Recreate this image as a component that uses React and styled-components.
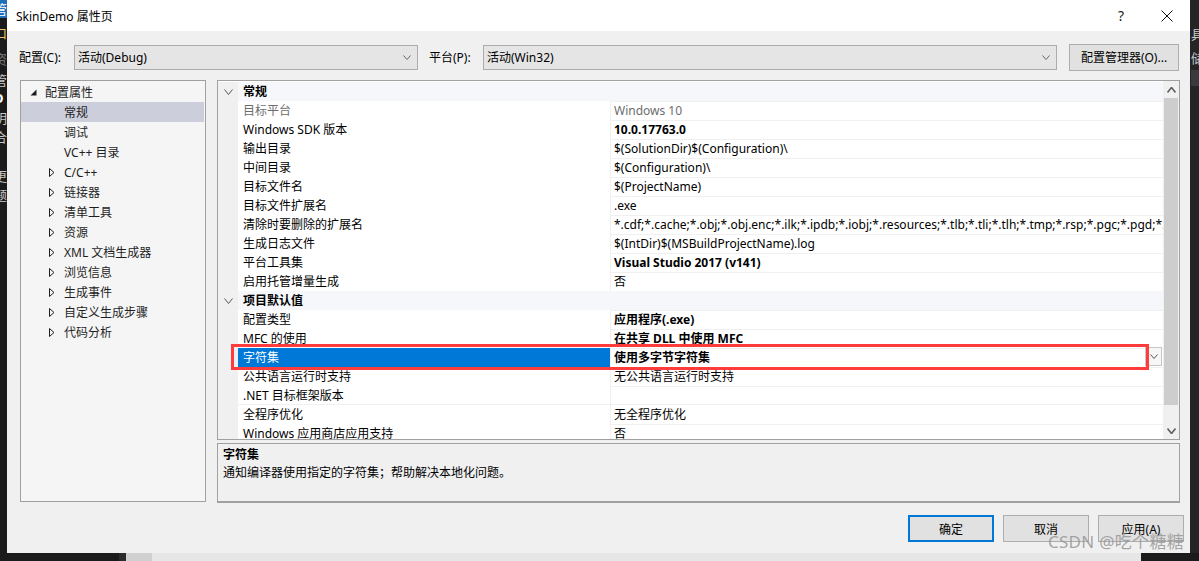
import React from 'react';
import styled, { createGlobalStyle } from 'styled-components';

const GlobalStyle = createGlobalStyle`
  html, body {
    margin: 0;
    padding: 0;
    background: #1e1e1e;
  }
  body {
    font-family: "Segoe UI", "Noto Sans", "Noto Sans CJK SC", sans-serif;
    font-size: 12px;
    color: #000;
  }
  * { box-sizing: border-box; }
`;

const Screen = styled.div`
  position: relative;
  width: 1199px;
  height: 561px;
  overflow: hidden;
  display: grid;
  grid-template-columns: 7px 1183px 9px;
  grid-template-rows: 553px 8px;
  background: #1e1e1e;
`;

const SideStrip = styled.div`
  display: flex;
  flex-direction: column;
  overflow: hidden;
  background: ${(p) => (p.$right ? '#252526' : '#1b1b1c')};
  padding-top: ${(p) => (p.$right ? '22px' : '0')};
`;

const SideGlyph = styled.div`
  height: ${(p) => p.$h || 19}px;
  line-height: ${(p) => p.$h || 19}px;
  font-size: 13px;
  white-space: nowrap;
  color: ${(p) => p.$color || '#c8c8c8'};
  background: ${(p) => p.$bg || 'transparent'};
  font-weight: ${(p) => (p.$bold ? 700 : 400)};
  margin-left: ${(p) => (p.$right ? '1px' : '-6px')};
`;

const BottomStrip = styled.div`
  grid-column: 1 / -1;
  display: flex;
`;

const BottomPart = styled.div`
  width: ${(p) => (p.$w ? `${p.$w}px` : 'auto')};
  flex: ${(p) => (p.$w ? 'none' : '1')};
  background: ${(p) => p.$bg};
`;

const Dialog = styled.div`
  display: flex;
  flex-direction: column;
  background: #f0f0f0;
`;

const TitleBar = styled.div`
  height: 31px;
  display: flex;
  align-items: center;
  background: #fff;
  padding-left: 9px;
`;

const TitleText = styled.div`
  flex: 1;
  font-size: 12px;
  color: #000;
`;

const TitleButton = styled.div`
  width: 46px;
  height: 31px;
  display: flex;
  align-items: center;
  justify-content: center;
  font-size: 14px;
  color: #222;
`;

const ConfigRow = styled.div`
  height: 49px;
  display: flex;
  align-items: center;
  padding: 3px 0 0 12px;
`;

const ConfigLabel = styled.div`
  width: ${(p) => p.$w}px;
  margin-left: ${(p) => p.$ml || 0}px;
  color: #000;
`;

const Combo = styled.div`
  width: ${(p) => p.$w}px;
  height: 25px;
  display: flex;
  align-items: center;
  padding: 0 6px 0 3px;
  background: #e5e5e5;
  border: 1px solid #acacac;
`;

const ComboText = styled.div`
  flex: 1;
`;

const ManagerButton = styled.div`
  width: 110px;
  height: 27px;
  margin-left: 12px;
  display: flex;
  align-items: center;
  justify-content: center;
  background: #e1e1e1;
  border: 1px solid #adadad;
`;

const Body = styled.div`
  height: 423px;
  display: flex;
  gap: 11px;
  padding: 0 10px 0 13px;
`;

const TreePanel = styled.div`
  width: 186px;
  height: 422px;
  background: #f5f5f5;
  border: 1px solid #a0a0a0;
  padding-top: 1px;
`;

const TreeRow = styled.div`
  height: 20px;
  display: flex;
  align-items: center;
  padding-left: ${(p) => 9 + p.$level * 19}px;
  margin-right: 1px;
  background: ${(p) => (p.$selected ? '#cccedb' : 'transparent')};
  color: #1e1e1e;
`;

const Expander = styled.div`
  width: 15px;
  height: 20px;
  display: flex;
  align-items: center;
`;

const RightColumn = styled.div`
  flex: 1;
  display: flex;
  flex-direction: column;
  gap: 3px;
`;

const Grid = styled.div`
  height: 360px;
  display: flex;
  background: #fff;
  border: 1px solid #a0a0a0;
`;

const Rows = styled.div`
  flex: 1;
  overflow: hidden;
  padding-top: 1px;
`;

const Row = styled.div`
  position: relative;
  height: 19px;
  display: grid;
  grid-template-columns: ${(p) => (p.$header ? '20px 1fr' : '20px 373px 1fr')};
  line-height: 18px;
`;

const Gutter = styled.div`
  background: #f0f0f0;
  display: flex;
  align-items: center;
  justify-content: center;
`;

const HeaderCell = styled.div`
  background: #f5f7fa;
  font-weight: 700;
  padding: 1px 0 0 5px;
  border-bottom: 1px solid #f0f0f0;
`;

const NameCell = styled.div`
  padding: 1px 0 0 5px;
  white-space: nowrap;
  overflow: hidden;
  border-right: 1px solid #f0f0f0;
  border-bottom: 1px solid #f0f0f0;
  background: ${(p) => (p.$selected ? '#0078d7' : '#fff')};
  color: ${(p) => (p.$selected ? '#fff' : p.$dim ? '#6d6d6d' : '#000')};
`;

const ValueCell = styled.div`
  display: flex;
  min-width: 0;
  padding-left: 3px;
  border-bottom: 1px solid #f0f0f0;
`;

const ValueText = styled.div`
  flex: 1;
  padding-top: 1px;
  white-space: nowrap;
  overflow: hidden;
  font-weight: ${(p) => (p.$bold ? 700 : 400)};
  color: ${(p) => (p.$dim ? '#6d6d6d' : '#000')};
`;

const DropButton = styled.div`
  width: 17px;
  height: 19px;
  margin: -1px 1px 0 0;
  display: flex;
  align-items: center;
  justify-content: center;
  background: #f7f7f7;
  border: 1px solid #c6c6c6;
`;

const Highlight = styled.div`
  position: absolute;
  left: 13px;
  right: 14px;
  top: -4px;
  bottom: -3px;
  border: 3px solid #ff3b3b;
  pointer-events: none;
  z-index: 2;
`;

const ScrollBar = styled.div`
  width: 16px;
  display: flex;
  flex-direction: column;
  background: #f0f0f0;
`;

const ScrollArrow = styled.div`
  height: 17px;
  display: flex;
  align-items: center;
  justify-content: center;
`;

const ScrollTrack = styled.div`
  flex: 1;
  padding: 0 1px;
`;

const ScrollThumb = styled.div`
  height: 307px;
  background: #cdcdcd;
`;

const Description = styled.div`
  height: 60px;
  background: #f0f0f0;
  border: 1px solid #a0a0a0;
  border-bottom: 2px solid #a0a0a0;
  padding: 2px 5px 0;
  line-height: 18px;
`;

const DescTitle = styled.div`
  font-weight: 700;
`;

const Footer = styled.div`
  display: flex;
  justify-content: flex-end;
  gap: 9px;
  padding: 12px 6px 0 0;
`;

const DialogButton = styled.div`
  width: 86px;
  height: 27px;
  display: flex;
  align-items: center;
  justify-content: center;
  background: #e1e1e1;
  border: ${(p) => (p.$primary ? '2px solid #0078d7' : '1px solid #adadad')};
`;

const Watermark = styled.div`
  position: absolute;
  right: 15px;
  bottom: 8px;
  font-family: "Noto Sans", "Noto Sans CJK SC", sans-serif;
  font-size: 17px;
  letter-spacing: 0.3px;
  color: rgba(150, 150, 150, 0.85);
  pointer-events: none;
`;

const Chevron = ({ up, color = '#444', w = 9, h = 5, sw = 1 }) => (
  <svg width={w} height={h + 1} viewBox={`0 0 ${w} ${h + 1}`}>
    <path
      d={up ? `M0.5 ${h + 0.5} L${w / 2} 0.5 L${w - 0.5} ${h + 0.5}` : `M0.5 0.5 L${w / 2} ${h + 0.5} L${w - 0.5} 0.5`}
      fill="none"
      stroke={color}
      strokeWidth={sw}
    />
  </svg>
);

const ExpandedTri = () => (
  <svg width="7" height="7" viewBox="0 0 7 7">
    <path d="M6.5 0.5 L6.5 6.5 L0.5 6.5 Z" fill="#1e1e1e" />
  </svg>
);

const CollapsedTri = () => (
  <svg width="6" height="9" viewBox="0 0 6 9">
    <path d="M0.5 0.5 L5 4.5 L0.5 8.5 Z" fill="none" stroke="#1e1e1e" strokeWidth="1" />
  </svg>
);

const CloseIcon = () => (
  <svg width="12" height="12" viewBox="0 0 12 12">
    <path d="M0.5 0.5 L11.5 11.5 M11.5 0.5 L0.5 11.5" stroke="#111" strokeWidth="1" />
  </svg>
);

const treeItems = [
  { label: '配置属性', level: 0, kind: 'open' },
  { label: '常规', level: 1, selected: true },
  { label: '调试', level: 1 },
  { label: 'VC++ 目录', level: 1 },
  { label: 'C/C++', level: 1, kind: 'closed' },
  { label: '链接器', level: 1, kind: 'closed' },
  { label: '清单工具', level: 1, kind: 'closed' },
  { label: '资源', level: 1, kind: 'closed' },
  { label: 'XML 文档生成器', level: 1, kind: 'closed' },
  { label: '浏览信息', level: 1, kind: 'closed' },
  { label: '生成事件', level: 1, kind: 'closed' },
  { label: '自定义生成步骤', level: 1, kind: 'closed' },
  { label: '代码分析', level: 1, kind: 'closed' },
];

const sections = [
  {
    title: '常规',
    rows: [
      { name: '目标平台', value: 'Windows 10', dim: true },
      { name: 'Windows SDK 版本', value: '10.0.17763.0', bold: true },
      { name: '输出目录', value: '$(SolutionDir)$(Configuration)\\' },
      { name: '中间目录', value: '$(Configuration)\\' },
      { name: '目标文件名', value: '$(ProjectName)' },
      { name: '目标文件扩展名', value: '.exe' },
      {
        name: '清除时要删除的扩展名',
        value:
          '*.cdf;*.cache;*.obj;*.obj.enc;*.ilk;*.ipdb;*.iobj;*.resources;*.tlb;*.tli;*.tlh;*.tmp;*.rsp;*.pgc;*.pgd;*.meta;$(TLogLocation)*.tlog;*.manifest;*.res;*.pch;*.exp;*.idb;*.rep;*.xdc;*.pdb',
      },
      { name: '生成日志文件', value: '$(IntDir)$(MSBuildProjectName).log' },
      { name: '平台工具集', value: 'Visual Studio 2017 (v141)', bold: true },
      { name: '启用托管增量生成', value: '否' },
    ],
  },
  {
    title: '项目默认值',
    rows: [
      { name: '配置类型', value: '应用程序(.exe)', bold: true },
      { name: 'MFC 的使用', value: '在共享 DLL 中使用 MFC', bold: true },
      { name: '字符集', value: '使用多字节字符集', bold: true, selected: true },
      { name: '公共语言运行时支持', value: '无公共语言运行时支持' },
      { name: '.NET 目标框架版本', value: '' },
      { name: '全程序优化', value: '无全程序优化' },
      { name: 'Windows 应用商店应用支持', value: '否' },
    ],
  },
];

const leftGlyphs = [
  { t: '管', bg: '#1c6fb8', color: '#fff', h: 18 },
  { t: '口', color: '#e8c66a', h: 30 },
  { t: '资', color: '#777', h: 23 },
  { t: '管', h: 18 },
  { t: 'D', color: '#fff', bold: true, h: 19 },
  { t: '明', h: 20 },
  { t: '合', h: 19 },
  { t: 'ɔ', h: 20 },
  { t: '更', h: 19 },
  { t: '题', h: 19 },
];

function PropertyRow({ row }) {
  return (
    <Row>
      <Gutter />
      <NameCell $selected={row.selected} $dim={row.dim}>
        {row.name}
      </NameCell>
      <ValueCell>
        <ValueText $bold={row.bold} $dim={row.dim}>
          {row.value}
        </ValueText>
        {row.selected && (
          <DropButton>
            <Chevron w={8} h={4} color="#555" />
          </DropButton>
        )}
      </ValueCell>
      {row.selected && <Highlight />}
    </Row>
  );
}

export default function App() {
  return (
    <>
      <GlobalStyle />
      <Screen>
        <SideStrip>
          {leftGlyphs.map((g, i) => (
            <SideGlyph key={i} $bg={g.bg} $color={g.color} $bold={g.bold} $h={g.h}>
              {g.t}
            </SideGlyph>
          ))}
        </SideStrip>

        <Dialog>
          <TitleBar>
            <TitleText>SkinDemo 属性页</TitleText>
            <TitleButton>?</TitleButton>
            <TitleButton>
              <CloseIcon />
            </TitleButton>
          </TitleBar>

          <ConfigRow>
            <ConfigLabel $w={55}>配置(C):</ConfigLabel>
            <Combo $w={344}>
              <ComboText>活动(Debug)</ComboText>
              <Chevron w={8} h={4} color="#666" />
            </Combo>
            <ConfigLabel $w={54} $ml={11}>
              平台(P):
            </ConfigLabel>
            <Combo $w={574}>
              <ComboText>活动(Win32)</ComboText>
              <Chevron w={8} h={4} color="#666" />
            </Combo>
            <ManagerButton>配置管理器(O)...</ManagerButton>
          </ConfigRow>

          <Body>
            <TreePanel>
              {treeItems.map((item) => (
                <TreeRow key={item.label} $level={item.level} $selected={item.selected}>
                  <Expander>
                    {item.kind === 'open' && <ExpandedTri />}
                    {item.kind === 'closed' && <CollapsedTri />}
                  </Expander>
                  {item.label}
                </TreeRow>
              ))}
            </TreePanel>

            <RightColumn>
              <Grid>
                <Rows>
                  {sections.map((section) => (
                    <React.Fragment key={section.title}>
                      <Row $header>
                        <Gutter>
                          <Chevron w={9} h={5} color="#555" />
                        </Gutter>
                        <HeaderCell>{section.title}</HeaderCell>
                      </Row>
                      {section.rows.map((row) => (
                        <PropertyRow key={row.name} row={row} />
                      ))}
                    </React.Fragment>
                  ))}
                </Rows>
                <ScrollBar>
                  <ScrollArrow>
                    <Chevron up w={9} h={5} color="#606060" sw={1.6} />
                  </ScrollArrow>
                  <ScrollTrack>
                    <ScrollThumb />
                  </ScrollTrack>
                  <ScrollArrow>
                    <Chevron w={9} h={5} color="#606060" sw={1.6} />
                  </ScrollArrow>
                </ScrollBar>
              </Grid>
              <Description>
                <DescTitle>字符集</DescTitle>
                <div>通知编译器使用指定的字符集；帮助解决本地化问题。</div>
              </Description>
            </RightColumn>
          </Body>

          <Footer>
            <DialogButton $primary>确定</DialogButton>
            <DialogButton>取消</DialogButton>
            <DialogButton>应用(A)</DialogButton>
          </Footer>
        </Dialog>

        <SideStrip $right>
          <SideGlyph $right $h={24}>具</SideGlyph>
          <SideGlyph $right $h={24}>储</SideGlyph>
          <SideGlyph $right $h={16} $bg="#3a3a3e" />
        </SideStrip>

        <BottomStrip>
          <BottomPart $w={119} $bg="#1b1b1c" />
          <BottomPart $w={7} $bg="#2b2b2b" />
          <BottomPart $w={26} $bg="#d0d0d0" />
          <BottomPart $bg="#e6e6e6" />
          <BottomPart $w={58} $bg="#1b1b1c" />
        </BottomStrip>

        <Watermark>CSDN @吃个糖糖</Watermark>
      </Screen>
    </>
  );
}
